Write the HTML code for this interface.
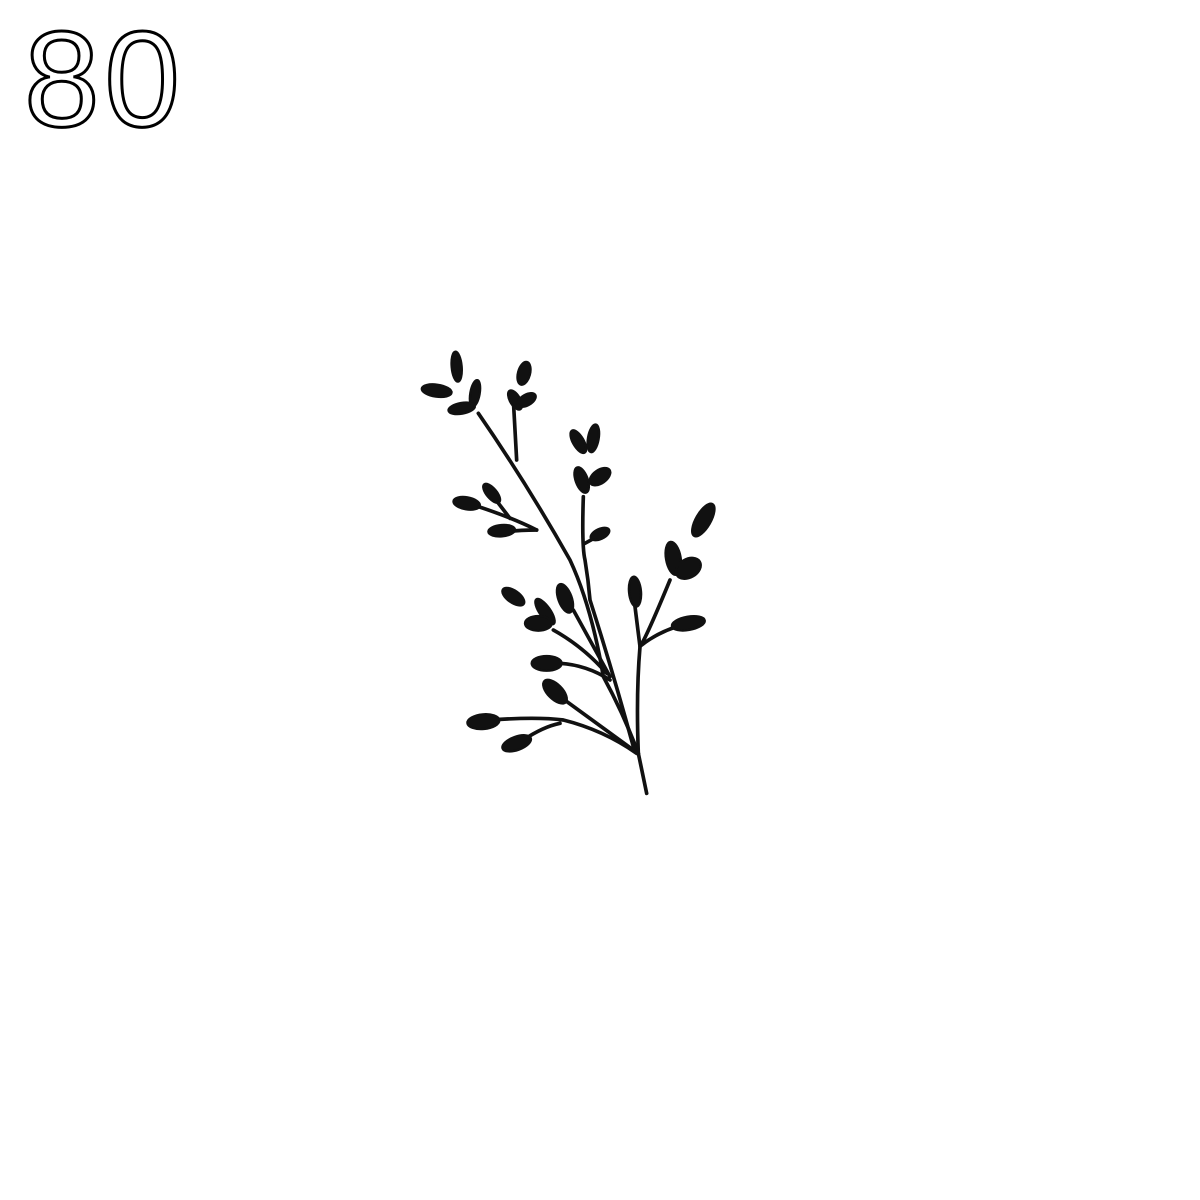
<!DOCTYPE html>
<html><head><meta charset="utf-8"><style>
html,body{margin:0;padding:0;background:#fff;width:1200px;height:1200px;overflow:hidden}
</style></head><body>
<svg width="1200" height="1200" viewBox="0 0 1200 1200" xmlns="http://www.w3.org/2000/svg">
<text x="24" y="126" font-family="Liberation Sans, sans-serif" font-size="136" fill="none" stroke="#000" stroke-width="3" letter-spacing="14" textLength="170" lengthAdjust="spacing">80</text>
<g transform="translate(410,340) scale(0.33333)">
<g fill="none" stroke="#111" stroke-width="11" stroke-linecap="round">
<path d="M205,220 Q350,430 480,660 Q545,800 580,1010 Q640,1120 685,1240 L710,1360"/>
<path d="M320,360 L310,180"/>
<path d="M520,470 Q515,620 525,660 Q535,720 540,780 Q610,1000 670,1220 L685,1240"/>
<path d="M685,1240 Q678,1060 690,920 L675,800"/>
<path d="M690,920 Q710,890 780,720"/>
<path d="M695,915 Q740,880 800,860"/>
<path d="M525,610 L570,585"/>
<path d="M380,570 Q300,530 190,495"/>
<path d="M300,535 L250,470"/>
<path d="M380,570 Q330,570 290,575"/>
<path d="M430,870 Q520,920 590,1000"/>
<path d="M490,810 Q550,920 600,1010"/>
<path d="M450,970 Q530,975 600,1020"/>
<path d="M450,1070 Q560,1150 670,1230"/>
<path d="M240,1140 Q380,1130 460,1140 Q580,1170 680,1240"/>
<path d="M340,1200 Q400,1160 450,1150"/>
</g>
<g fill="#111" stroke="#111" stroke-width="7">
<ellipse cx="140" cy="80" rx="15" ry="45" transform="rotate(-5 140 80)"/>
<ellipse cx="80" cy="152" rx="45" ry="18" transform="rotate(8 80 152)"/>
<ellipse cx="195" cy="160" rx="14" ry="40" transform="rotate(10 195 160)"/>
<ellipse cx="155" cy="205" rx="40" ry="16" transform="rotate(-10 155 205)"/>
<ellipse cx="342" cy="100" rx="18" ry="35" transform="rotate(15 342 100)"/>
<ellipse cx="315" cy="180" rx="15" ry="32" transform="rotate(-30 315 180)"/>
<ellipse cx="350" cy="180" rx="30" ry="16" transform="rotate(-30 350 180)"/>
<ellipse cx="505" cy="305" rx="16" ry="38" transform="rotate(-30 505 305)"/>
<ellipse cx="550" cy="295" rx="16" ry="42" transform="rotate(10 550 295)"/>
<ellipse cx="515" cy="420" rx="18" ry="40" transform="rotate(-20 515 420)"/>
<ellipse cx="570" cy="410" rx="35" ry="20" transform="rotate(-35 570 410)"/>
<ellipse cx="570" cy="582" rx="30" ry="15" transform="rotate(-25 570 582)"/>
<ellipse cx="245" cy="460" rx="15" ry="35" transform="rotate(-40 245 460)"/>
<ellipse cx="170" cy="490" rx="40" ry="18" transform="rotate(10 170 490)"/>
<ellipse cx="275" cy="572" rx="40" ry="17" transform="rotate(-5 275 572)"/>
<ellipse cx="880" cy="540" rx="22" ry="55" transform="rotate(30 880 540)"/>
<ellipse cx="790" cy="655" rx="22" ry="50" transform="rotate(-10 790 655)"/>
<ellipse cx="835" cy="685" rx="40" ry="28" transform="rotate(-30 835 685)"/>
<ellipse cx="675" cy="755" rx="18" ry="45" transform="rotate(-5 675 755)"/>
<ellipse cx="835" cy="850" rx="50" ry="20" transform="rotate(-10 835 850)"/>
<ellipse cx="310" cy="770" rx="38" ry="18" transform="rotate(35 310 770)"/>
<ellipse cx="405" cy="815" rx="16" ry="45" transform="rotate(-35 405 815)"/>
<ellipse cx="385" cy="850" rx="40" ry="22"/>
<ellipse cx="465" cy="775" rx="20" ry="45" transform="rotate(-20 465 775)"/>
<ellipse cx="410" cy="970" rx="45" ry="22"/>
<ellipse cx="435" cy="1055" rx="22" ry="45" transform="rotate(-45 435 1055)"/>
<ellipse cx="220" cy="1145" rx="48" ry="22" transform="rotate(-5 220 1145)"/>
<ellipse cx="320" cy="1210" rx="45" ry="20" transform="rotate(-20 320 1210)"/>
</g>
</g>
</svg>
</body></html>
